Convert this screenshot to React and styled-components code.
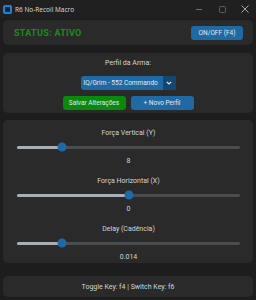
import React from 'react';
import styled, { createGlobalStyle } from 'styled-components';

const GlobalStyle = createGlobalStyle`
  html, body {
    margin: 0;
    padding: 0;
    background: #1d1d1d;
  }
  body {
    font-family: Roboto, "Liberation Sans", sans-serif;
    color: #dce4ee;
  }
`;

const sliders = [
  { label: 'Força Vertical (Y)', value: '8', pos: 0.2 },
  { label: 'Força Horizontal (X)', value: '0', pos: 0.5 },
  { label: 'Delay (Cadência)', value: '0.014', pos: 0.2 },
];

const App = () => {
  return (
    <Window>
      <GlobalStyle />
      <TitleBar>
        <AppIcon />
        <TitleText>R6 No-Recoil Macro</TitleText>
        <Controls>
          <Ctrl>
            <svg width="8" height="8" viewBox="0 0 8 8">
              <path d="M1 4.5h6" stroke="#6e6e6e" strokeWidth="1" />
            </svg>
          </Ctrl>
          <Ctrl>
            <svg width="8" height="8" viewBox="0 0 8 8">
              <rect x="1.5" y="1.5" width="6" height="6" rx="1" fill="none" stroke="#5e5e5e" strokeWidth="1" />
            </svg>
          </Ctrl>
          <Ctrl>
            <svg width="8" height="8" viewBox="0 0 8 8">
              <path d="M0.5 0.5l7 7M7.5 0.5l-7 7" stroke="#a8a8a8" strokeWidth="1" />
            </svg>
          </Ctrl>
        </Controls>
      </TitleBar>

      <Body>
        <StatusCard>
          <Status>STATUS: ATIVO</Status>
          <Button>ON/OFF (F4)</Button>
        </StatusCard>

        <ProfileCard>
          <Label>Perfil da Arma:</Label>
          <Combo>
            <ComboText>IQ/Grim - 552 Commando</ComboText>
            <ComboArrow>
              <svg width="6" height="4" viewBox="0 0 6 4">
                <path d="M0.8 0.8L3 3l2.2-2.2" stroke="#dce4ee" strokeWidth="1.2" fill="none" />
              </svg>
            </ComboArrow>
          </Combo>
          <ButtonRow>
            <Button $green $w={63}>Salvar Alterações</Button>
            <Button $w={63}>+ Novo Perfil</Button>
          </ButtonRow>
        </ProfileCard>

        <SliderCard>
          {sliders.map((s) => (
            <Group key={s.label}>
              <Label>{s.label}</Label>
              <Track>
                <Progress style={{ width: `${s.pos * 100}%` }} />
                <Thumb style={{ left: `${s.pos * 100}%` }} />
              </Track>
              <Label>{s.value}</Label>
            </Group>
          ))}
        </SliderCard>

        <FooterCard>
          <Label>Toggle Key: f4 | Switch Key: f6</Label>
        </FooterCard>
      </Body>
    </Window>
  );
};

const Window = styled.div`
  width: 256px;
  height: 300px;
  background: #1d1d1d;
  overflow: hidden;
  display: flex;
  flex-direction: column;
`

const TitleBar = styled.div`
  height: 18px;
  display: flex;
  align-items: center;
  background: #202020;
  padding-left: 3px;
`

const AppIcon = styled.div`
  width: 5px;
  height: 5px;
  border: 2px solid #1a84d6;
  border-radius: 2px;
  background: #10253a;
  margin-right: 3px;
`

const TitleText = styled.span`
  font-family: "Open Sans", "Noto Sans", sans-serif;
  font-size: 6.5px;
  color: #dedede;
  flex: 1;
`

const Controls = styled.div`
  display: flex;
  align-items: center;
`

const Ctrl = styled.div`
  width: 23px;
  height: 18px;
  display: flex;
  align-items: center;
  justify-content: center;
`

const Body = styled.div`
  display: flex;
  flex-direction: column;
  padding: 2px 3px 0 3px;
`

const Card = styled.div`
  background: #2a2a2a;
  border-radius: 5px;
`

const StatusCard = styled(Card)`
  height: 25px;
  display: flex;
  align-items: center;
  justify-content: space-between;
  padding: 0 10px 0 11px;
`

const Status = styled.span`
  color: #1b8c1b;
  font-weight: 700;
  font-size: 9px;
  letter-spacing: 0.3px;
`

const Button = styled.div`
  width: ${(p) => (p.$w ? p.$w : 52)}px;
  height: 14px;
  border-radius: 3px;
  background: ${(p) => (p.$green ? '#0a8a0a' : '#1f6aa5')};
  color: #e3e9ef;
  font-size: 6.5px;
  display: flex;
  align-items: center;
  justify-content: center;
`

const ProfileCard = styled(Card)`
  margin-top: 8px;
  height: 60px;
  display: flex;
  flex-direction: column;
  align-items: center;
  padding-top: 5px;
  box-sizing: border-box;
`

const Label = styled.div`
  font-size: 7px;
  line-height: 10px;
  text-align: center;
  color: #cfd6de;
`

const Combo = styled.div`
  margin-top: 8px;
  width: 95px;
  height: 14px;
  border-radius: 3px;
  overflow: hidden;
  display: flex;
  background: #1f6aa5;
`

const ComboText = styled.div`
  flex: 1;
  font-size: 6.5px;
  color: #e3e9ef;
  display: flex;
  align-items: center;
  padding-left: 3px;
  white-space: nowrap;
`

const ComboArrow = styled.div`
  width: 13px;
  background: #144870;
  display: flex;
  align-items: center;
  justify-content: center;
`

const ButtonRow = styled.div`
  margin-top: 6px;
  display: flex;
  gap: 5px;
`

const SliderCard = styled(Card)`
  margin-top: 7px;
  height: 143px;
  padding: 8px 13px 0 14px;
  box-sizing: border-box;
  display: flex;
  flex-direction: column;
  gap: 10px;
`

const Group = styled.div`
  display: flex;
  flex-direction: column;
  gap: 4px;
`

const Track = styled.div`
  position: relative;
  height: 3px;
  margin: 3.5px 0;
  border-radius: 2px;
  background: #4a4d50;
`

const Progress = styled.div`
  height: 100%;
  border-radius: 2px;
  background: #aab0b5;
`

const Thumb = styled.div`
  position: absolute;
  top: 50%;
  width: 9px;
  height: 9px;
  border-radius: 50%;
  background: #1f6aa5;
  transform: translate(-50%, -50%);
`

const FooterCard = styled(Card)`
  margin-top: 13px;
  height: 21px;
  display: flex;
  align-items: center;
  justify-content: center;
`

export default App;
